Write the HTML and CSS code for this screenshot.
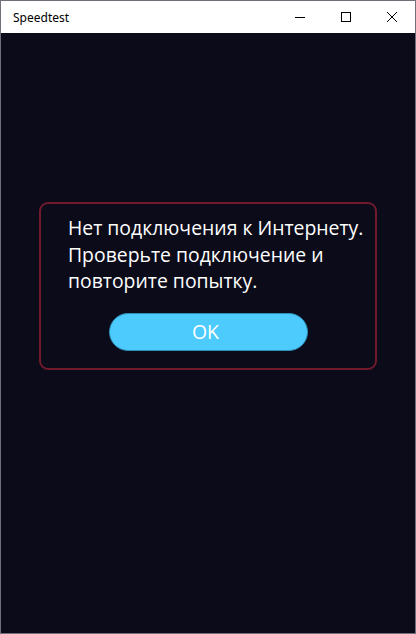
FILE: index.html
```html
<!DOCTYPE html>
<html lang="ru">
<head>
<meta charset="utf-8">
<title>Speedtest</title>
<link rel="stylesheet" href="styles.css">
</head>
<body>
<div class="window">
  <header class="titlebar">
    <span class="title">Speedtest</span>
    <div class="controls">
      <span class="ctl"><svg width="10" height="10" viewBox="0 0 10 10"><path d="M0 5.5H10" stroke="#000" stroke-width="1"/></svg></span>
      <span class="ctl"><svg width="10" height="10" viewBox="0 0 10 10"><rect x="0.5" y="0.5" width="9" height="9" fill="none" stroke="#000" stroke-width="1"/></svg></span>
      <span class="ctl"><svg width="10" height="10" viewBox="0 0 10 10"><path d="M0 0L10 10M10 0L0 10" stroke="#000" stroke-width="1"/></svg></span>
    </div>
  </header>
  <main class="content">
    <div class="dialog">
      <p class="message">Нет подключения к Интернету.<br>Проверьте подключение и<br>повторите попытку.</p>
      <button class="ok">OK</button>
    </div>
  </main>
</div>
</body>
</html>
```
FILE: styles.css
```css
html, body {
  margin: 0;
  padding: 0;
  width: 416px;
  height: 634px;
  overflow: hidden;
}
.window {
  width: 416px;
  height: 634px;
  box-sizing: border-box;
  border: 1px solid #707078;
  display: flex;
  flex-direction: column;
  background: #0c0b1a;
}
.titlebar {
  height: 32px;
  background: #ffffff;
  display: flex;
  align-items: center;
  justify-content: space-between;
  flex-shrink: 0;
}
.title {
  font-family: "Noto Sans", "DejaVu Sans", sans-serif;
  font-size: 12px;
  color: #000;
  padding-left: 12px;
}
.controls {
  display: flex;
  height: 100%;
}
.ctl {
  width: 46px;
  height: 100%;
  display: flex;
  align-items: center;
  justify-content: center;
}
.content {
  flex: 1;
  display: flex;
  flex-direction: column;
  align-items: flex-start;
  padding-top: 169px;
  padding-left: 38px;
}
.dialog {
  width: 338px;
  height: 168px;
  box-sizing: border-box;
  border: 2px solid #701a2c;
  border-radius: 9px;
  display: flex;
  flex-direction: column;
  align-items: flex-start;
  padding: 11px 0 0 27px;
}
.message {
  margin: 0;
  font-family: "Open Sans", "Noto Sans", sans-serif;
  font-size: 19.4px;
  line-height: 26.5px;
  color: #ffffff;
  white-space: nowrap;
}
.ok {
  margin: 18px 0 0 41px;
  width: 199px;
  height: 38px;
  border-radius: 19px;
  border: 1px solid #2d8fb8;
  background: #4ccbfc;
  color: #ffffff;
  font-family: "Open Sans", "Noto Sans", sans-serif;
  font-size: 19.5px;
  padding: 0 6px 0 0;
  cursor: pointer;
}
```
